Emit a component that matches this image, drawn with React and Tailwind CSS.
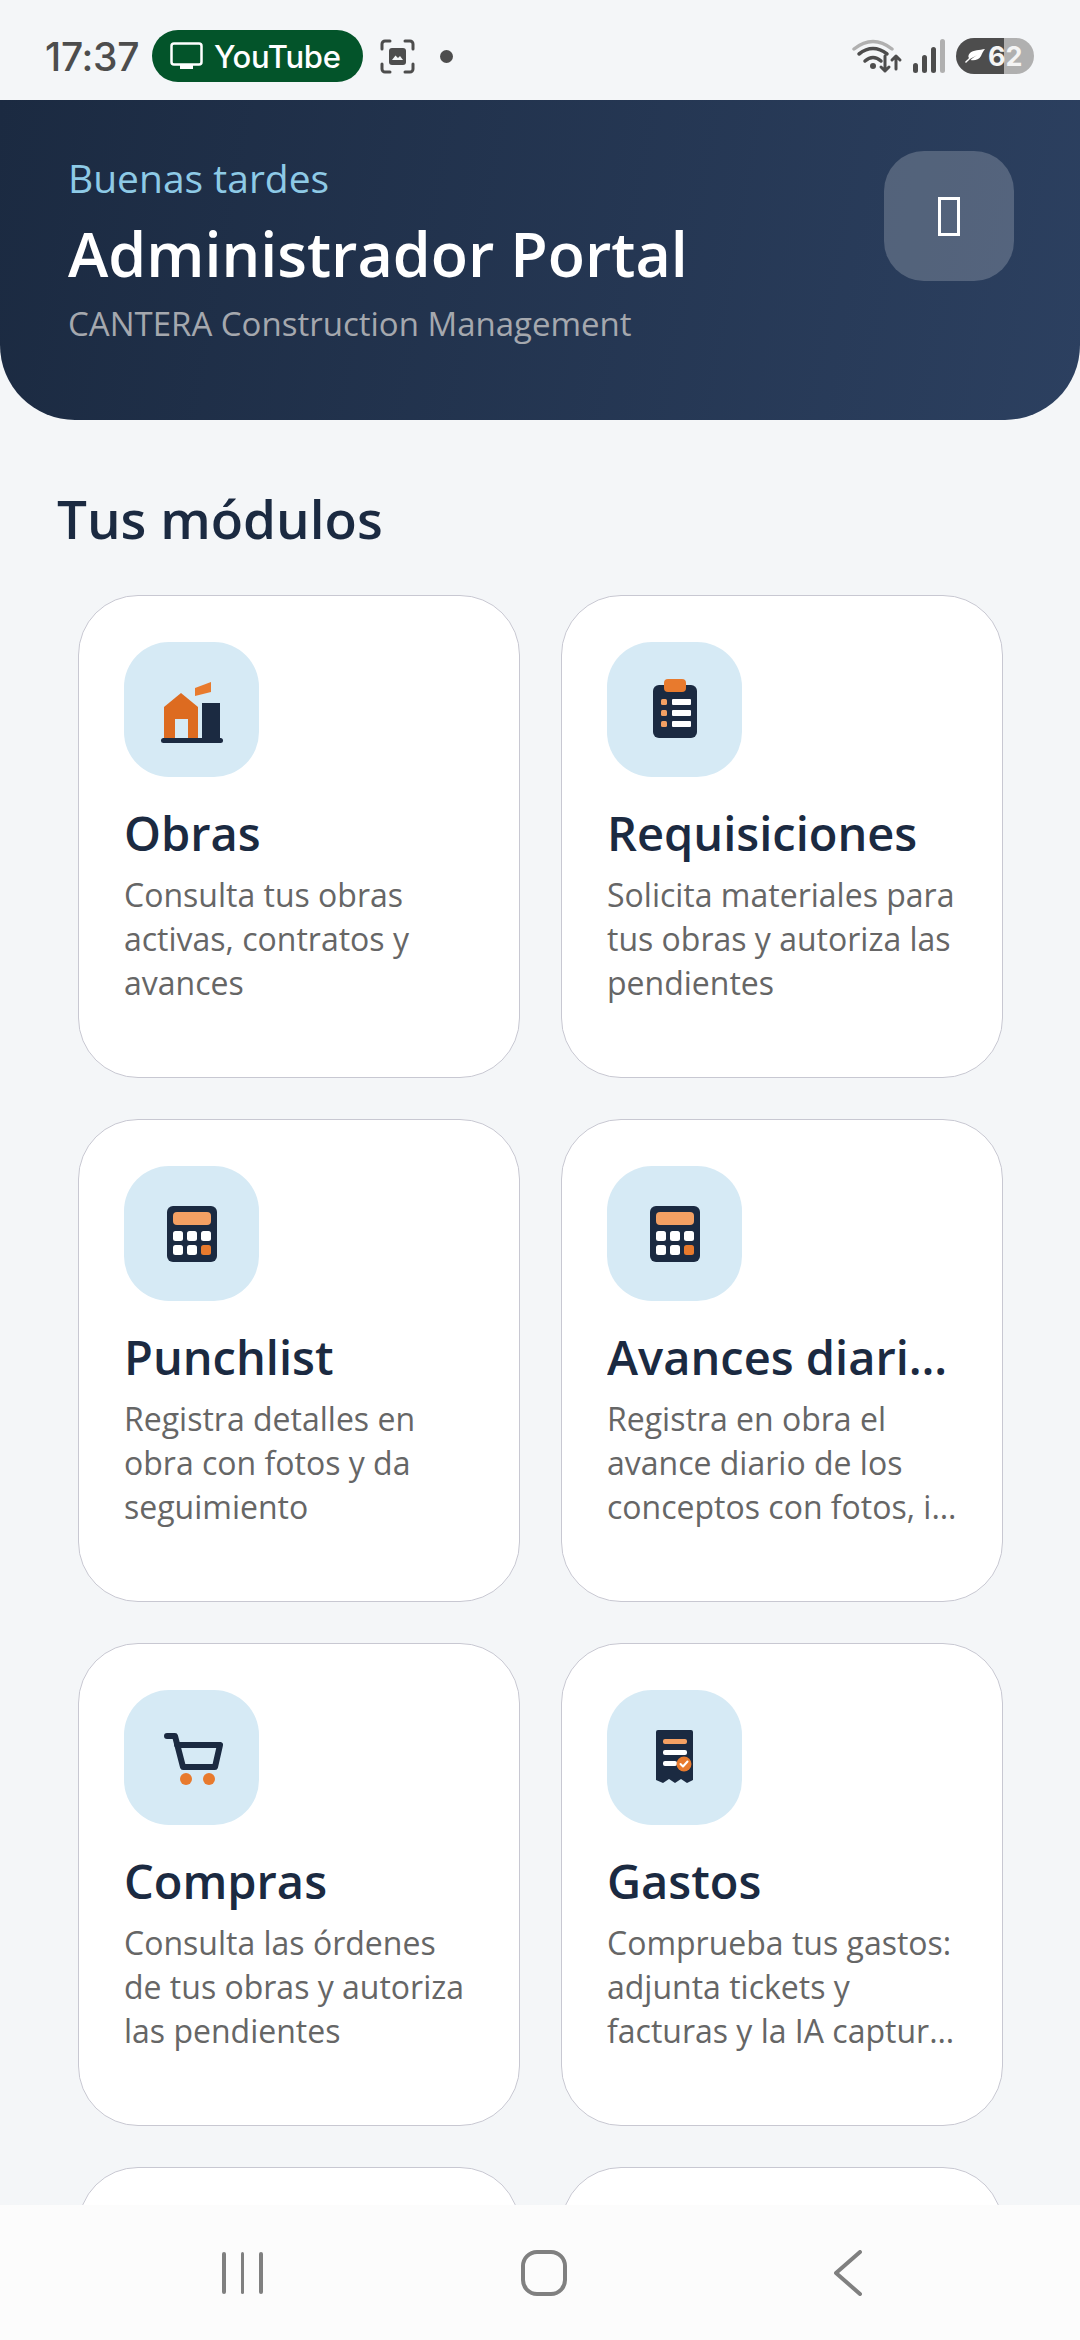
const DARK = "#1b2a41";
const OR = "#e87a2d";
const LO = "#f4a063";
const BOX = "#d6eaf5";

function Svg({ children }) {
  return (
    <svg width="135" height="135" viewBox="0 0 135 135" className="block">
      {children}
    </svg>
  );
}

function IconObras() {
  return (
    <Svg>
      <path d="M40 65L57 51L74 65V96H40Z" fill="#dd6b20" />
      <rect x="51" y="77" width="13" height="19" fill={BOX} />
      <rect x="78" y="61" width="18" height="35" fill={DARK} />
      <rect x="37" y="96" width="62" height="5" rx="2.5" fill={DARK} />
      <path d="M71 46L87 40V50L71 54Z" fill={OR} />
    </Svg>
  );
}
function IconReq() {
  return (
    <Svg>
      <rect x="46" y="43" width="44" height="53" rx="6" fill={DARK} />
      <rect x="57" y="37" width="22" height="13" rx="4" fill={OR} />
      {[57, 68, 79].map((y) => (
        <g key={y}>
          <rect x="54" y={y} width="6" height="6" rx="1.5" fill={LO} />
          <rect x="65" y={y} width="19" height="6" rx="1" fill="#fff" />
        </g>
      ))}
    </Svg>
  );
}
function IconCalc() {
  return (
    <Svg>
      <rect x="43" y="40" width="50" height="56" rx="6" fill={DARK} />
      <rect x="49" y="46" width="38" height="13" rx="4" fill={LO} />
      {[65, 79].map((y) =>
        [49, 63, 77].map((x) => (
          <rect key={x + "-" + y} x={x} y={y} width="10" height="10" rx="2.5" fill={x === 77 && y === 79 ? OR : "#fff"} />
        ))
      )}
    </Svg>
  );
}
function IconCart() {
  return (
    <Svg>
      <path d="M43 46H51L59 77H91L96 55H53" fill="none" stroke={DARK} strokeWidth="6" strokeLinecap="round" strokeLinejoin="round" />
      <circle cx="62" cy="89" r="6" fill={OR} />
      <circle cx="85" cy="89" r="6" fill={OR} />
    </Svg>
  );
}
function IconGastos() {
  return (
    <Svg>
      <path d="M51 40H84A2 2 0 0 1 86 42V90L80 93L74 89L68 93L62 89L56 93L49 90V42A2 2 0 0 1 51 40Z" fill={DARK} />
      <rect x="56" y="49" width="24" height="5" rx="2" fill={LO} />
      <rect x="56" y="60" width="24" height="5" rx="2" fill="#fff" />
      <rect x="56" y="71" width="14" height="5" rx="2" fill="#fff" />
      <circle cx="77" cy="74" r="7.5" fill={OR} />
      <path d="M73.5 74L76 76.5L80.5 71.5" fill="none" stroke="#fff" strokeWidth="2" strokeLinecap="round" strokeLinejoin="round" />
    </Svg>
  );
}

const modules = [
  { t: "Obras", d: "Consulta tus obras activas, contratos y avances", I: IconObras },
  { t: "Requisiciones", d: "Solicita materiales para tus obras y autoriza las pendientes", I: IconReq },
  { t: "Punchlist", d: "Registra detalles en obra con fotos y da seguimiento", I: IconCalc },
  { t: "Avances diarios", d: "Registra en obra el avance diario de los conceptos con fotos,\u00a0i…", I: IconCalc },
  { t: "Compras", d: "Consulta las órdenes de tus obras y autoriza las pendientes", I: IconCart },
  { t: "Gastos", d: "Comprueba tus gastos: adjunta tickets y facturas y la IA captur…", I: IconGastos },
  { t: "", d: "", I: null },
  { t: "", d: "", I: null },
];

function Card({ t, d, I }) {
  return (
    <div className="h-[483px] rounded-[60px] border-[1.5px] border-[#c8c8d2] bg-white pt-[46px] pr-[45px] pl-[45px]">
      {I && (
        <>
          <div className="h-[135px] w-[135px] rounded-[45px] bg-[#d6eaf5]">
            <I />
          </div>
          <div className="mt-[25px] truncate text-[47px] leading-[62px] font-semibold text-[#1b2a41]">{t}</div>
          <div className="mt-[9px] mr-[-2px] text-[32px] leading-[44px] text-[#666666]">{d}</div>
        </>
      )}
    </div>
  );
}

export default function App() {
  return (
    <div className="flex h-[2340px] w-[1080px] flex-col overflow-hidden bg-[#f4f6f8] font-['Open_Sans',sans-serif]">
      {/* status bar */}
      <div className="flex h-[100px] shrink-0 items-center pt-[12px] pr-[46px] pl-[45px] font-['Inter',sans-serif]">
        <span className="w-[98px] text-[39px] leading-none font-medium tracking-[-0.3px] text-[#4d4d4d]">17:37</span>
        <div className="ml-[9px] flex h-[52px] w-[211px] items-center gap-[11px] rounded-full bg-[#03542a] pl-[18px]">
          <svg width="33" height="28" viewBox="0 0 33 28" fill="none">
            <rect x="1.5" y="1.5" width="30" height="21" rx="2.5" stroke="#fff" strokeWidth="2.5" />
            <rect x="10" y="23" width="13" height="4" fill="#fff" />
          </svg>
          <span className="text-[31px] leading-none font-medium tracking-[-0.3px] text-white">YouTube</span>
        </div>
        <svg className="ml-[17px]" width="35" height="35" viewBox="0 0 35 35" fill="none">
          <path d="M2 10V5A3 3 0 0 1 5 2H10M25 2H30A3 3 0 0 1 33 5V10M33 25V30A3 3 0 0 1 30 33H25M10 33H5A3 3 0 0 1 2 30V25" stroke="#4d4d4d" strokeWidth="3" strokeLinecap="round" />
          <rect x="9" y="9" width="17" height="17" rx="3" fill="#4d4d4d" />
          <path d="M12 21L15.5 16.5L18 19L20 17L23 21Z" fill="#f4f6f8" />
        </svg>
        <div className="ml-[25px] h-[13px] w-[13px] rounded-full bg-[#4d4d4d]" />
        <div className="flex-1" />
        <svg width="52" height="36" viewBox="0 0 52 36" fill="none" strokeLinecap="round">
          <path d="M2 11Q21 -4 40 11" stroke="#b0b0b0" strokeWidth="3.5" />
          <path d="M7 16Q21 5 35 16" stroke="#4d4d4d" strokeWidth="3.5" />
          <path d="M13 23Q21 16 29 23" stroke="#4d4d4d" strokeWidth="3.5" />
          <circle cx="21" cy="28" r="3" fill="#4d4d4d" />
          <path d="M33 18V33M29 29L33 33L37 29" stroke="#4d4d4d" strokeWidth="3" strokeLinejoin="round" />
          <path d="M44 31V18M40 22L44 18L48 22" stroke="#4d4d4d" strokeWidth="3" strokeLinejoin="round" />
        </svg>
        <svg className="ml-[8px]" width="33" height="34" viewBox="0 0 33 34">
          <rect x="1" y="24" width="5" height="10" rx="2.5" fill="#4d4d4d" />
          <rect x="10" y="16" width="5" height="18" rx="2.5" fill="#4d4d4d" />
          <rect x="19" y="8" width="5" height="26" rx="2.5" fill="#4d4d4d" />
          <rect x="28" y="0" width="5" height="34" rx="2.5" fill="#b0b0b0" />
        </svg>
        <div className="ml-[11px] flex h-[36px] w-[78px] items-center rounded-full bg-[linear-gradient(90deg,#4d4d4d_62%,#b0b0b0_62%)] pl-[9px]">
          <svg width="20" height="16" viewBox="0 0 20 16" fill="#fff">
            <path d="M1 15C2 14 4 12 5 11C8 9 11 8 12 7C10 9 7 10 5.500 12C9 13 14 12 16 8C17 6 18 3 20 1C15 2 8 2 5 5C3 7 3 9 4 10C3 11 1 13 0 14Z" />
          </svg>
          <span className="ml-[3px] text-[27px] leading-none font-bold text-[#f4f4f4]">62</span>
        </div>
      </div>

      {/* header */}
      <div className="flex h-[320px] shrink-0 items-start justify-between rounded-b-[75px] bg-[linear-gradient(100deg,#1b2a41,#2c4060)] pt-[53px] pr-[66px] pl-[68px]">
        <div>
          <div className="text-[39px] leading-[50px] text-[#8ecae6]">Buenas tardes</div>
          <div className="mt-[11px] text-[61px] leading-[80px] font-semibold text-white">Administrador Portal</div>
          <div className="mt-[8px] text-[33px] leading-[44px] text-[#a5a8ae]">CANTERA Construction Management</div>
        </div>
        <div className="mt-[-2px] flex h-[130px] w-[130px] items-center justify-center rounded-[40px] bg-white/20">
          <div className="h-[39px] w-[22px] border-[3px] border-white" />
        </div>
      </div>

      {/* content */}
      <div className="min-h-0 flex-1 overflow-hidden">
        <div className="mt-[66px] pl-[57px] text-[53px] leading-[66px] font-semibold text-[#1b2a41]">Tus módulos</div>
        <div className="mt-[43px] grid grid-cols-[442px_442px] gap-x-[41px] gap-y-[41px] pl-[78px]">
          {modules.map((m, i) => (
            <Card key={i} {...m} />
          ))}
        </div>
      </div>

      {/* nav */}
      <div className="flex h-[135px] shrink-0 items-center bg-[#fcfcfc] pl-[222px]">
        <div className="flex gap-[15px]">
          <div className="h-[42px] w-[3.500px] rounded-full bg-[#808080]" />
          <div className="h-[42px] w-[3.500px] rounded-full bg-[#808080]" />
          <div className="h-[42px] w-[3.500px] rounded-full bg-[#808080]" />
        </div>
        <div className="ml-[258px] h-[46px] w-[46px] rounded-[16px] border-[4px] border-[#808080]" />
        <svg className="ml-[267px]" width="28" height="46" viewBox="0 0 28 46" fill="none">
          <path d="M26 2L2 23L26 44" stroke="#808080" strokeWidth="4" strokeLinecap="round" strokeLinejoin="round" />
        </svg>
      </div>
    </div>
  );
}
